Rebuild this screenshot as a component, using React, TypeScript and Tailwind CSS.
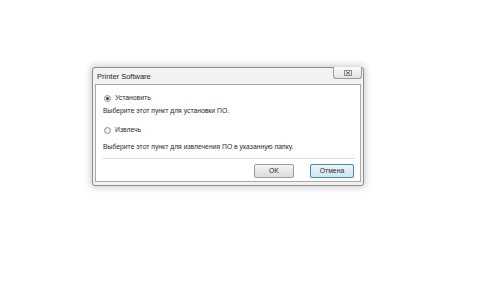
import React from "react";

function Radio({ checked }: { checked?: boolean }) {
  return (
    <span className="relative flex h-[7px] w-[7px] shrink-0 items-center justify-center rounded-full border border-[#8f8f8f] bg-gradient-to-br from-[#e6e6e6] to-[#fbfbfb]">
      {checked && <span className="h-[3px] w-[3px] rounded-full bg-[#2a3f5a]" />}
    </span>
  );
}

export default function App() {
  return (
    <div
      className="h-[282px] w-[480px] overflow-hidden bg-white pl-[92px] pt-[67px] text-[#2a2a2a]"
      style={{ fontFamily: '"Liberation Sans", "Noto Sans", Arial, sans-serif' }}
    >
      <div className="relative flex h-[119px] w-[272px] flex-col rounded-[3px] border border-[#8c8c8c] bg-[#f2f2f2] px-[2px] pb-[3px] shadow-[0_0_6px_2px_rgba(0,0,0,0.18)]">
        {/* title bar */}
        <div className="flex h-[16px] shrink-0 items-center justify-between">
          <span className="pl-[2px] pt-[1px] text-[7.5px] leading-none text-[#1e1e1e]">Printer Software</span>
          <div className="-mt-[1px] mr-[-1px] flex h-[12px] w-[29px] items-center justify-center self-start rounded-b-[3px] border border-t-0 border-[#9a9a9a] bg-gradient-to-b from-[#fafafa] to-[#e4e4e4]">
            <svg width="8" height="6" viewBox="0 0 8 6">
              <rect x="0.5" y="0.5" width="7" height="5" fill="none" stroke="#8a8a8a" strokeWidth="1" />
              <path d="M2 1.5 L6 4.5 M6 1.5 L2 4.5" stroke="#6a6a6a" strokeWidth="1" />
            </svg>
          </div>
        </div>
        {/* client area */}
        <div className="flex flex-1 flex-col border border-[#a9a9a9] bg-white pl-[7px] text-[6.8px] leading-[8px]">
          <div className="mt-[9px] flex h-[8px] items-center gap-[4px] pl-[1px]">
            <Radio checked />
            <span>Установить</span>
          </div>
          <div className="mt-[5px] h-[8px]">Выберите этот пункт для установки ПО.</div>
          <div className="mt-[11px] flex h-[8px] items-center gap-[4px] pl-[1px]">
            <Radio />
            <span>Извлечь</span>
          </div>
          <div className="mt-[9px] h-[8px]">Выберите этот пункт для извлечения ПО в указанную папку.</div>
          <div className="mr-[5px] mt-[7px] h-px bg-[#dcdcdc]" />
          <div className="mr-[6px] mt-[5px] flex justify-end gap-[16px]">
            <div className="flex h-[14px] w-[40px] items-center justify-center rounded-[2px] border border-[#9c9c9c] bg-gradient-to-b from-[#f4f4f4] to-[#dcdcdc] text-[6.8px]">
              OK
            </div>
            <div className="flex h-[14px] w-[44px] items-center justify-center rounded-[2px] border border-[#4f8aa8] bg-gradient-to-b from-[#eaf5fa] to-[#cfe6ef] text-[6.8px]">
              Отмена
            </div>
          </div>
        </div>
      </div>
    </div>
  );
}
